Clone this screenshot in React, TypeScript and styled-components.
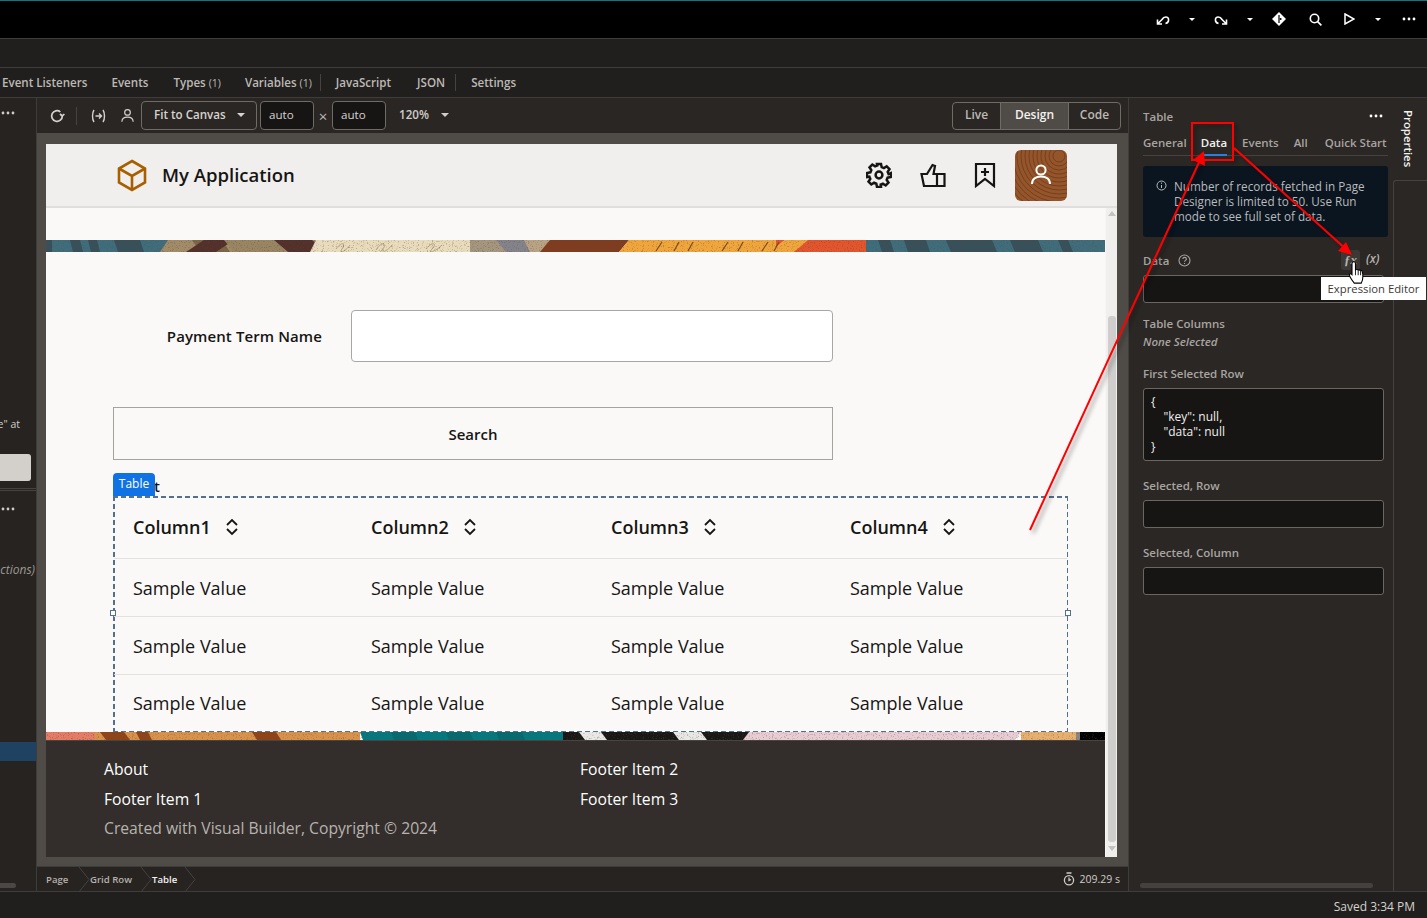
import type { ReactNode } from "react";
import styled, { createGlobalStyle } from "styled-components";

const GlobalStyle = createGlobalStyle`
  html, body {
    margin: 0;
    padding: 0;
    background: #201f1d;
    overflow: hidden;
  }
  * { box-sizing: border-box; }
  body {
    font-family: "Open Sans", "Noto Sans", sans-serif;
    -webkit-font-smoothing: antialiased;
  }
`;

const Shell = styled.div`
  position: relative;
  width: 1427px;
  height: 918px;
  display: flex;
  flex-direction: column;
  overflow: hidden;
  color: #d5d2ce;
`;

/* ---------- top chrome ---------- */

const TopBar = styled.header`
  height: 39px;
  flex: none;
  background: #000;
  border-top: 1px solid #127680;
  border-bottom: 1px solid #3f3d3b;
  display: flex;
  align-items: center;
  justify-content: flex-end;
  color: #fff;
  padding: 0 9px 1px 0;
`;

const TopIcon = styled.span<{ $w: number }>`
  width: ${(p) => p.$w}px;
  display: flex;
  justify-content: center;
  align-items: center;
`;

const SubBar = styled.div`
  height: 29px;
  flex: none;
  background: #201f1d;
  border-bottom: 1px solid #3f3d3b;
`;

const PageTabs = styled.nav`
  height: 30px;
  flex: none;
  background: #201f1d;
  border-bottom: 1px solid #3f3d3b;
  display: flex;
  align-items: center;
  padding-left: 2px;
  font-size: 11.6px;
  font-weight: 600;
  color: #bdb9b4;
  white-space: nowrap;
`;

const PageTab = styled.span<{ $gap: number }>`
  margin-right: ${(p) => p.$gap}px;
`;

const Count = styled.span`
  font-size: 10.5px;
  font-weight: 400;
  margin-left: 3px;
`;

const TabDivider = styled.i`
  width: 1px;
  height: 17px;
  background: #45423f;
  margin-right: 15px;
`;

const Main = styled.div`
  height: 794px;
  flex: none;
  display: flex;
  border-bottom: 1px solid #3f3d3b;
`;

/* ---------- clipped left panel ---------- */

const LeftPanel = styled.aside`
  width: 37px;
  flex: none;
  background: #272320;
  border-right: 1px solid #3f3d3b;
  display: flex;
  flex-direction: column;
  align-items: flex-end;
  overflow: hidden;
  position: relative;
`;

const LeftDots = styled.span<{ $top: number }>`
  align-self: flex-start;
  margin: ${(p) => p.$top}px 0 0 1px;
  display: flex;
`;

const LeftNote = styled.div`
  margin-top: 302px;
  margin-right: 16px;
  font-size: 10.5px;
  color: #cfccc8;
  white-space: nowrap;
`;

const LeftButton = styled.div`
  margin-top: 23px;
  width: 100%;
  padding-right: 5px;
  height: 27px;
  &::after {
    content: "";
    display: block;
    height: 27px;
    background: #d3d0cc;
    border-radius: 0 3px 3px 0;
  }
`;

const LeftRule = styled.div`
  width: 100%;
  height: 3px;
  margin-top: 7px;
  border-top: 1px solid #45423f;
  border-bottom: 1px solid #45423f;
`;

const LeftItalic = styled.div`
  margin-top: 50px;
  margin-right: 1px;
  font-size: 12px;
  font-style: italic;
  color: #9d9994;
  white-space: nowrap;
`;

const LeftSelected = styled.div`
  margin-top: 164px;
  width: 100%;
  height: 19px;
  background: #1f4263;
`;

const LeftScroll = styled.div`
  position: absolute;
  left: 0;
  bottom: 3px;
  width: 16px;
  height: 5px;
  background: #4a4744;
  border-radius: 0 3px 3px 0;
`;

/* ---------- centre column ---------- */

const Center = styled.section`
  width: 1092px;
  flex: none;
  display: flex;
  flex-direction: column;
  border-right: 1px solid #3f3d3b;
`;

const Toolbar = styled.div`
  height: 35px;
  flex: none;
  background: #2a2623;
  display: flex;
  align-items: center;
  padding: 0 7px 0 12px;
  font-size: 11.6px;
`;

const ToolDivider = styled.i`
  width: 1px;
  height: 18px;
  background: #45423f;
  margin: 0 14px 0 11px;
`;

const ToolIcon = styled.span<{ $gap?: number }>`
  display: flex;
  margin-right: ${(p) => p.$gap ?? 0}px;
`;

const SelectBox = styled.div`
  width: 116px;
  height: 29px;
  border: 1px solid #6f6c68;
  border-radius: 4px;
  display: flex;
  align-items: center;
  justify-content: space-between;
  padding: 0 11px 2px 12px;
  margin-right: 3px;
  font-weight: 600;
  color: #d6d3cf;
`;

const SizeInput = styled.div`
  width: 54px;
  height: 29px;
  background: #161514;
  border: 1px solid #6f6c68;
  border-radius: 4px;
  display: flex;
  align-items: center;
  padding: 0 0 2px 8px;
  color: #d6d3cf;
`;

const Times = styled.span`
  width: 18px;
  text-align: center;
  color: #bdb9b4;
  font-size: 15px;
  line-height: 20px;
`;

const Zoom = styled.div`
  margin-left: 13px;
  display: flex;
  align-items: center;
  gap: 12px;
  padding-bottom: 2px;
  font-weight: 600;
  color: #d0cdc8;
`;

const Segments = styled.div`
  margin-left: auto;
  height: 28px;
  display: flex;
  border: 1px solid #6f6c68;
  border-radius: 4px;
  overflow: hidden;
  font-size: 12px;
  font-weight: 600;
`;

const Segment = styled.div<{ $w: number; $active?: boolean }>`
  width: ${(p) => p.$w}px;
  display: flex;
  align-items: center;
  justify-content: center;
  padding-bottom: 2px;
  color: ${(p) => (p.$active ? "#f4f2ef" : "#bdb9b4")};
  background: ${(p) => (p.$active ? "#4f4b47" : "transparent")};
  & + & {
    border-left: 1px solid #6f6c68;
  }
`;

const Canvas = styled.div`
  flex: 1;
  background: #4f4b47;
  padding: 11px 11px 9px 9px;
  min-height: 0;
`;

const Preview = styled.div`
  height: 100%;
  background: #fbf9f8;
  display: flex;
  flex-direction: column;
  color: #161513;
`;

const AppHeader = styled.div`
  height: 64px;
  flex: none;
  background: #f0efee;
  border-bottom: 2px solid #e0dfdd;
  display: flex;
  align-items: center;
  padding: 0 50px 0 71px;
`;

const Brand = styled.div`
  font-size: 18.5px;
  font-weight: 600;
  margin: 0 0 2px 15px;
`;

const HeaderIcons = styled.div`
  margin-left: auto;
  display: flex;
  align-items: center;
`;

const HeaderIcon = styled.span<{ $gap: number }>`
  display: flex;
  margin-right: ${(p) => p.$gap}px;
`;

const Avatar = styled.div`
  width: 52px;
  height: 51px;
  border-radius: 6px;
  overflow: hidden;
  display: flex;
`;

const PreviewBody = styled.div`
  flex: 1;
  display: flex;
  min-height: 0;
`;

const Page = styled.div`
  width: 1059px;
  display: flex;
  flex-direction: column;
`;

const Strip = styled.svg<{ $top: number; $h: number }>`
  display: block;
  flex: none;
  width: 1059px;
  height: ${(p) => p.$h}px;
  margin-top: ${(p) => p.$top}px;
`;

const TermRow = styled.div`
  margin-top: 58px;
  height: 52px;
  display: flex;
  align-items: center;
`;

const TermLabel = styled.label`
  width: 276px;
  text-align: right;
  font-size: 15px;
  font-weight: 600;
  letter-spacing: 0.1px;
`;

const TermInput = styled.div`
  margin-left: 29px;
  width: 482px;
  height: 52px;
  background: #fff;
  border: 1.5px solid #a9a7a4;
  border-radius: 4px;
`;

const SearchButton = styled.div`
  margin: 45px 0 0 67px;
  width: 720px;
  height: 53px;
  border: 1.5px solid #a5a3a0;
  display: flex;
  align-items: center;
  justify-content: center;
  font-size: 15px;
  font-weight: 600;
`;

const dash = "linear-gradient(to right, #54708f 60%, transparent 0)";
const dashV = "linear-gradient(to bottom, #54708f 60%, transparent 0)";

const TableFrame = styled.div`
  position: relative;
  margin: 36px 0 0 67px;
  width: 955px;
  height: 236px;
  padding: 1px;
  background:
    ${dash} left top / 8px 1.5px repeat-x,
    ${dash} left bottom / 8px 1.5px repeat-x,
    ${dashV} left top / 1.5px 8px repeat-y,
    ${dashV} right top / 1.5px 8px repeat-y;
`;

const TableBadge = styled.div`
  position: absolute;
  left: 0;
  top: -23px;
  width: 42px;
  height: 23px;
  background: #0f72e5;
  color: #fff;
  border-radius: 4px 4px 0 0;
  font-size: 12px;
  display: flex;
  align-items: center;
  justify-content: center;
  padding-bottom: 2px;
`;

const BehindBadge = styled.span`
  position: absolute;
  left: 41px;
  top: -20px;
  font-size: 15px;
  font-weight: 600;
  line-height: 20px;
`;

const Handle = styled.i<{ $side: "left" | "right" }>`
  position: absolute;
  ${(p) => p.$side}: -3px;
  top: 114px;
  width: 6px;
  height: 6px;
  background: #fff;
  border: 1px solid #54708f;
`;

const TRow = styled.div<{ $head?: boolean }>`
  display: grid;
  grid-template-columns: 238px 240px 239px 1fr;
  align-items: center;
  padding-left: 19px;
  height: ${(p) => (p.$head ? "62px" : "58px")};
  padding-bottom: ${(p) => (p.$head ? "2px" : "0")};
  border-bottom: 1px solid #e4e2e0;
  font-size: 18px;
  font-weight: ${(p) => (p.$head ? 600 : 400)};
  &:last-child {
    border-bottom: none;
    height: 56px;
  }
`;

const HeadCell = styled.div`
  display: flex;
  align-items: center;
  gap: 14px;
`;

const SiteFooter = styled.footer`
  flex: 1;
  background: #332e2b;
  border-top: 1px solid #4a443f;
  display: grid;
  grid-template-columns: 476px 1fr;
  grid-auto-rows: 30px;
  padding: 17px 0 0 58px;
  font-size: 15.7px;
  color: #fff;
`;

const FooterCopy = styled.div`
  grid-column: 1 / 3;
  color: #b7b3ae;
  line-height: 28px;
  margin-top: -4px;
`;

const ScrollTrack = styled.div`
  width: 12px;
  background: #f0efee;
  display: flex;
  flex-direction: column;
  align-items: center;
  border-left: 1px solid #f7f6f5;
`;

const ScrollThumb = styled.div`
  width: 8px;
  height: 526px;
  margin-top: 100px;
  background: #cfcecc;
  border-radius: 3px;
`;

const ScrollArrow = styled.i<{ $down?: boolean }>`
  width: 0;
  height: 0;
  margin-top: ${(p) => (p.$down ? "4px" : "3px")};
  border-left: 4px solid transparent;
  border-right: 4px solid transparent;
  ${(p) => (p.$down ? "border-top" : "border-bottom")}: 5px solid #c3c2c0;
`;

const Crumbs = styled.div`
  height: 25px;
  flex: none;
  background: #272320;
  border-top: 1px solid #3f3d3b;
  display: flex;
  align-items: center;
  font-size: 9.6px;
  font-weight: 600;
  color: #b5b1ac;
  padding: 0 8px 0 9px;
`;

const Crumb = styled.span<{ $active?: boolean; $w: number }>`
  width: ${(p) => p.$w}px;
  color: ${(p) => (p.$active ? "#f4f2ef" : "#b5b1ac")};
  display: flex;
  align-items: center;
  justify-content: space-between;
`;

const Timer = styled.div`
  margin-left: auto;
  display: flex;
  align-items: center;
  gap: 4px;
  font-size: 10.5px;
  font-weight: 400;
  color: #cfccc8;
`;

/* ---------- properties panel ---------- */

const Props = styled.aside`
  width: 264px;
  flex: none;
  background: #2b2725;
  padding: 0 5px 0 14px;
  position: relative;
  font-size: 11.5px;
  font-weight: 600;
  color: #a8a4a0;
`;

const PropsTitle = styled.div`
  height: 37px;
  padding-top: 11px;
  display: flex;
  justify-content: space-between;
  padding-right: 5px;
  line-height: 16px;
  svg {
    margin-top: 5px;
  }
`;

const PropsTabs = styled.div`
  height: 21px;
  border-bottom: 1px solid #45423f;
  display: flex;
  line-height: 16px;
`;

const PropsTab = styled.span<{ $gap: number; $active?: boolean }>`
  margin-right: ${(p) => p.$gap}px;
  height: 21px;
  color: ${(p) => (p.$active ? "#f4f2ef" : "#a8a4a0")};
  border-bottom: ${(p) => (p.$active ? "2px solid #2a7fe0" : "none")};
  white-space: nowrap;
`;

const InfoBox = styled.div`
  margin-top: 10px;
  height: 71px;
  background: #0a1520;
  border-radius: 3px;
  padding: 13px 8px 0 13px;
  display: flex;
  gap: 7px;
  font-size: 11.7px;
  font-weight: 400;
  line-height: 15px;
  color: #b9bbbd;
  svg {
    flex: none;
    margin-top: 1px;
  }
`;

const DataRow = styled.div`
  margin-top: 13px;
  height: 20px;
  display: flex;
  align-items: center;
  gap: 9px;
`;

const ExprButton = styled.span`
  margin-left: auto;
  width: 19px;
  height: 20px;
  background: #3b3835;
  border-radius: 3px;
  display: flex;
  align-items: center;
  justify-content: center;
  font-style: italic;
  font-family: "Liberation Serif", serif;
  font-size: 13px;
  color: #b5b1ac;
`;

const VarButton = styled.span`
  width: 16px;
  margin: 0 6px 3px -3px;
  font-style: italic;
  font-size: 12px;
  white-space: nowrap;
  color: #b5b1ac;
`;

const FieldBox = styled.div<{ $top: number; $h?: number }>`
  margin-top: ${(p) => p.$top}px;
  width: 241px;
  height: ${(p) => p.$h ?? 28}px;
  background: #161514;
  border: 1px solid #6a6763;
  border-radius: 3px;
`;

const FieldLabel = styled.div<{ $top: number }>`
  margin-top: ${(p) => p.$top}px;
  line-height: 16px;
  height: 16px;
`;

const NoneSelected = styled.div`
  margin-top: 2px;
  height: 16px;
  line-height: 16px;
  font-style: italic;
`;

const JsonBox = styled(FieldBox)`
  font-weight: 400;
  font-size: 12px;
  line-height: 15px;
  color: #f0eeec;
  padding: 5px 7px;
  white-space: pre;
`;

const PropsScroll = styled.div`
  position: absolute;
  left: 11px;
  right: 20px;
  bottom: 3px;
  height: 5px;
  background: #44413e;
  border-radius: 3px;
`;

const Rail = styled.aside`
  width: 34px;
  flex: none;
  background: #2b2725;
`;

const RailTab = styled.div`
  height: 82px;
  padding: 12px 0 0 7px;
  font-size: 11.4px;
  font-weight: 600;
  line-height: 16px;
  color: #f4f2ef;
  writing-mode: vertical-rl;
`;

const RailBody = styled.div`
  height: calc(100% - 82px);
  border-left: 1px solid #45423f;
  border-top: 1px solid #45423f;
  border-top-left-radius: 3px;
`;

const StatusBar = styled.footer`
  flex: 1;
  background: #201f1d;
  display: flex;
  align-items: center;
  justify-content: flex-end;
  padding: 3px 12px 0 0;
  font-size: 12px;
  color: #d5d2ce;
`;

/* ---------- things lying over the page ---------- */

const Annotations = styled.svg`
  position: absolute;
  inset: 0;
  width: 1427px;
  height: 918px;
  pointer-events: none;
`;

const Tooltip = styled.div`
  position: absolute;
  left: 1321px;
  top: 277px;
  width: 105px;
  height: 23px;
  background: #fff;
  color: #3b3835;
  font-size: 11.3px;
  display: flex;
  align-items: center;
  justify-content: center;
  white-space: nowrap;
`;

const Cursor = styled.svg`
  position: absolute;
  left: 1348px;
  top: 260px;
`;

/* ---------- drawings ---------- */

const Dots = ({ color = "#fff" }: { color?: string }) => (
  <svg width="14" height="4" viewBox="0 0 14 4">
    <circle cx="2" cy="2" r="1.4" fill={color} />
    <circle cx="7" cy="2" r="1.4" fill={color} />
    <circle cx="12" cy="2" r="1.4" fill={color} />
  </svg>
);

const Caret = ({ color = "#fff", w = 8 }: { color?: string; w?: number }) => (
  <svg width={w} height={w / 2} viewBox="0 0 8 4">
    <path d="M0 0h8L4 4z" fill={color} />
  </svg>
);

const Stroke = ({ size, children, width = 2 }: { size: number; children: ReactNode; width?: number }) => (
  <svg width={size} height={size} viewBox="0 0 24 24" fill="none" stroke="currentColor" strokeWidth={width}>
    {children}
  </svg>
);

// x, width, fill, slant of the band's lower edge against its upper one
type Band = readonly [number, number, string, number];

const topBands: Band[] = [
  [0, 112, "#3f6d7b", 0],
  [0, 6, "#37505a", 0],
  [24, 10, "#37505a", 3],
  [42, 9, "#37505a", 3],
  [68, 26, "#37505a", 4],
  [108, 170, "#a18b68", 0],
  [108, 14, "#3f6d7b", -8],
  [146, 30, "#7d6647", 8],
  [158, 30, "#53302a", -18],
  [178, 52, "#9a8562", 10],
  [228, 38, "#53302a", 14],
  [270, 170, "#e8dcbc", -6],
  [424, 90, "#a5967f", 0],
  [424, 30, "#a5967f", 10],
  [450, 28, "#85838a", 10],
  [478, 26, "#b8a485", 6],
  [504, 79, "#803c1e", -10],
  [583, 155, "#f0a63c", -10],
  [730, 100, "#e2552d", 0],
  [738, 24, "#f0a63c", -14],
  [820, 239, "#3f6d7b", 0],
  [832, 12, "#37505a", 4],
  [858, 22, "#37505a", 4],
  [900, 46, "#37505a", 5],
  [964, 28, "#37505a", 5],
  [1012, 10, "#37505a", 5],
];

const bottomBands: Band[] = [
  [0, 49, "#e57c66", 0],
  [49, 265, "#d8924c", 0],
  [54, 24, "#8f4518", 6],
  [90, 12, "#8f4518", 4],
  [206, 24, "#8f4518", 5],
  [314, 203, "#04797f", 3],
  [345, 24, "#066b70", 3],
  [400, 24, "#066b70", 3],
  [450, 26, "#066b70", 3],
  [517, 186, "#1a1816", 0],
  [533, 22, "#e9e8e6", 6],
  [627, 28, "#e9e8e6", 6],
  [703, 272, "#e9cdd5", -6],
  [975, 55, "#e8b070", 0],
  [1030, 4, "#8b8683", 0],
  [1034, 25, "#000000", 0],
];

const StripArt = ({ bands, top, h, id, children }: { bands: Band[]; top: number; h: number; id: string; children?: ReactNode }) => (
  <Strip $top={top} $h={h} viewBox={`0 0 1059 ${h}`}>
    <defs>
      <filter id={id} x="0" y="0" width="100%" height="100%">
        <feTurbulence type="fractalNoise" baseFrequency="0.8" numOctaves="2" seed="4" />
        <feColorMatrix values="0 0 0 0 0.1  0 0 0 0 0.07  0 0 0 0 0.05  0 0 0 -5 2.2" />
      </filter>
    </defs>
    {bands.map(([x, w, fill, slant], i) => (
      <polygon key={i} points={`${x},0 ${x + w},0 ${x + w + slant},${h} ${x + slant},${h}`} fill={fill} />
    ))}
    {children}
    <rect width="1059" height={h} filter={`url(#${id})`} opacity="0.35" />
  </Strip>
);

const SortIcon = () => (
  <svg width="14" height="18" viewBox="0 0 14 18" fill="none" stroke="#161513" strokeWidth="1.8">
    <path d="M2 7l5-5 5 5M2 11l5 5 5-5" />
  </svg>
);

const Chevron = () => (
  <svg width="12" height="25" viewBox="0 0 12 25" fill="none" stroke="#45423f">
    <path d="M1 0l10 12.5L1 25" />
  </svg>
);

const woodRings = [6, 10, 14, 18, 22, 26, 30, 34, 38, 42, 46, 50, 54, 58];
const columns = ["Column1", "Column2", "Column3", "Column4"];

function App() {
  return (
    <Shell>
      <GlobalStyle />
      <TopBar>
        <TopIcon $w={18}>
          <svg width="14" height="12" viewBox="0 0 14 12" fill="none" stroke="#fff" strokeWidth="1.6">
            <path d="M1.5 6.5V11H6M1.5 11L6 6.5C8 3 12 3.5 12.5 6c.3 2-1 4-3 4.5" />
          </svg>
        </TopIcon>
        <TopIcon $w={40}><Caret w={6} /></TopIcon>
        <TopIcon $w={18}>
          <svg width="14" height="12" viewBox="0 0 14 12" fill="none" stroke="#fff" strokeWidth="1.6">
            <path d="M12.5 6.5V11H8M12.5 11L8 6.5C6 3 2 3.5 1.5 6c-.3 2 1 4 3 4.5" />
          </svg>
        </TopIcon>
        <TopIcon $w={40}><Caret w={6} /></TopIcon>
        <TopIcon $w={18}>
          <svg width="14" height="14" viewBox="0 0 14 14">
            <path d="M7 0l7 7-7 7-7-7z" fill="#fff" />
            <path d="M7 3v8" stroke="#000" strokeWidth="1.2" />
            <circle cx="8.6" cy="7" r="1" fill="#000" />
          </svg>
        </TopIcon>
        <TopIcon $w={54}>
          <svg width="13" height="13" viewBox="0 0 13 13" fill="none" stroke="#fff" strokeWidth="1.6">
            <circle cx="5.5" cy="5.5" r="4.2" />
            <path d="M8.6 8.6L12.4 12.4" />
          </svg>
        </TopIcon>
        <TopIcon $w={14}>
          <svg width="11" height="12" viewBox="0 0 11 12" fill="none" stroke="#fff" strokeWidth="1.5">
            <path d="M1 1l9 5-9 5z" />
          </svg>
        </TopIcon>
        <TopIcon $w={44}><Caret w={6} /></TopIcon>
        <TopIcon $w={18}><Dots /></TopIcon>
      </TopBar>
      <SubBar />
      <PageTabs>
        <PageTab $gap={24}>Event Listeners</PageTab>
        <PageTab $gap={25}>Events</PageTab>
        <PageTab $gap={24}>Types<Count>(1)</Count></PageTab>
        <PageTab $gap={8}>Variables<Count>(1)</Count></PageTab>
        <TabDivider />
        <PageTab $gap={26}>JavaScript</PageTab>
        <PageTab $gap={10}>JSON</PageTab>
        <TabDivider />
        <PageTab $gap={0}>Settings</PageTab>
      </PageTabs>
      <Main>
        <LeftPanel>
          <LeftDots $top={13}><Dots color="#cfccc8" /></LeftDots>
          <LeftNote>e" at</LeftNote>
          <LeftButton />
          <LeftRule />
          <LeftDots $top={16}><Dots color="#cfccc8" /></LeftDots>
          <LeftItalic>ctions)</LeftItalic>
          <LeftSelected />
          <LeftScroll />
        </LeftPanel>

        <Center>
          <Toolbar>
            <ToolIcon>
              <Stroke size={16} width={2.6}>
                <path d="M20 12a8 8 0 1 1-3-6.2M20 12l-3.5-3M20 12l3-3" />
              </Stroke>
            </ToolIcon>
            <ToolDivider />
            <ToolIcon $gap={14}>
              <svg width="15" height="14" viewBox="0 0 15 14" fill="none" stroke="currentColor" strokeWidth="1.4">
                <path d="M3 1C1 4 1 10 3 13M12 1c2 3 2 9 0 12M4.5 7h6M8 4.5L10.5 7 8 9.5" />
              </svg>
            </ToolIcon>
            <ToolIcon $gap={6}>
              <Stroke size={15} width={1.9}>
                <circle cx="12" cy="7" r="4.5" />
                <path d="M3 22c0-5 4-7.5 9-7.5s9 2.5 9 7.5" />
              </Stroke>
            </ToolIcon>
            <SelectBox>Fit to Canvas<Caret color="#d6d3cf" /></SelectBox>
            <SizeInput>auto</SizeInput>
            <Times>×</Times>
            <SizeInput>auto</SizeInput>
            <Zoom>120%<Caret color="#d0cdc8" /></Zoom>
            <Segments>
              <Segment $w={47}>Live</Segment>
              <Segment $w={68} $active>Design</Segment>
              <Segment $w={52}>Code</Segment>
            </Segments>
          </Toolbar>

          <Canvas>
            <Preview>
              <AppHeader>
                <svg width="30" height="33" viewBox="0 0 30 33" fill="none" stroke="#a85f00" strokeWidth="2.6">
                  <path d="M15 2l13 7.5v14L15 31 2 23.5v-14z" />
                  <path d="M2 9.5L15 17l13-7.5M15 17v14" />
                </svg>
                <Brand>My Application</Brand>
                <HeaderIcons>
                  <HeaderIcon $gap={28}>
                    <svg width="26" height="26" viewBox="0 0 26 26" fill="none" stroke="#161513" strokeWidth="2.5">
                      <path d="M11 2h4l.7 3.2 2.2.9 2.8-1.8 2.8 2.8-1.8 2.8.9 2.2L25 11v4l-3.4.7-.9 2.2 1.8 2.8-2.8 2.8-2.8-1.8-2.2.9L15 25h-4l-.7-3.4-2.2-.9-2.8 1.8-2.8-2.8 1.8-2.8-.9-2.2L1 15v-4l3.4-.7.9-2.2L3.5 5.3l2.8-2.8 2.8 1.8 2.2-.9z" />
                      <circle cx="13" cy="13" r="3.4" />
                    </svg>
                  </HeaderIcon>
                  <HeaderIcon $gap={28}>
                    <svg width="26" height="26" viewBox="0 0 26 26" fill="none" stroke="#161513" strokeWidth="2.2">
                      <path d="M4 24L1.5 12H7l5.5-9 2.5 1-1.500 8h11V24zM17 12v12" />
                    </svg>
                  </HeaderIcon>
                  <HeaderIcon $gap={19}>
                    <svg width="22" height="26" viewBox="0 0 22 26" fill="none" stroke="#161513" strokeWidth="2.2">
                      <path d="M2 2h18v22l-9-7-9 7z" />
                      <path d="M11 6v8M7 10h8" />
                    </svg>
                  </HeaderIcon>
                  <Avatar>
                    <svg width="52" height="51" viewBox="0 0 52 51">
                      <rect width="52" height="51" fill="#94552b" />
                      <g fill="none" stroke="#6e3a1b" strokeWidth="0.8">
                        {woodRings.map((r) => (
                          <circle key={r} cx="44" cy="6" r={r} />
                        ))}
                      </g>
                      <circle cx="26" cy="20" r="4.6" fill="none" stroke="#fff" strokeWidth="2" />
                      <path d="M17 34c0-5 4-7.5 9-7.5s9 2.5 9 7.5" fill="none" stroke="#fff" strokeWidth="2" />
                    </svg>
                  </Avatar>
                </HeaderIcons>
              </AppHeader>
              <PreviewBody>
                <Page>
                  <StripArt bands={topBands} top={32} h={12} id="speckle-top">
                    <path
                      d="M290 9c6-8 10-6 6 0s4 2 8-4M330 10c6-10 12-6 6 0s6 1 10-5M380 9c6-8 12-6 6 0s6 1 10-4"
                      fill="none"
                      stroke="#b3a27f"
                    />
                    <path
                      d="M610 11l6-9M628 11l5-9M642 11l5-9M676 11l6-9M692 11l5-9M716 11l6-9M728 11l5-9"
                      fill="none"
                      stroke="#7a4a1e"
                      strokeWidth="1.2"
                    />
                  </StripArt>
                  <TermRow>
                    <TermLabel>Payment Term Name</TermLabel>
                    <TermInput />
                  </TermRow>
                  <SearchButton>Search</SearchButton>
                  <TableFrame>
                    <BehindBadge>t</BehindBadge>
                    <TableBadge>Table</TableBadge>
                    <Handle $side="left" />
                    <Handle $side="right" />
                    <TRow $head>
                      {columns.map((c) => (
                        <HeadCell key={c}>{c}<SortIcon /></HeadCell>
                      ))}
                    </TRow>
                    {[0, 1, 2].map((r) => (
                      <TRow key={r}>
                        {columns.map((c) => (
                          <div key={c}>Sample Value</div>
                        ))}
                      </TRow>
                    ))}
                  </TableFrame>
                  <StripArt bands={bottomBands} top={0} h={8} id="speckle-bottom" />
                  <SiteFooter>
                    <div>About</div>
                    <div>Footer Item 2</div>
                    <div>Footer Item 1</div>
                    <div>Footer Item 3</div>
                    <FooterCopy>Created with Visual Builder, Copyright © 2024</FooterCopy>
                  </SiteFooter>
                </Page>
                <ScrollTrack>
                  <ScrollArrow />
                  <ScrollThumb />
                  <ScrollArrow $down />
                </ScrollTrack>
              </PreviewBody>
            </Preview>
          </Canvas>

          <Crumbs>
            <Crumb $w={44}>Page<Chevron /></Crumb>
            <Crumb $w={62}>Grid Row<Chevron /></Crumb>
            <Crumb $w={44} $active>Table<Chevron /></Crumb>
            <Timer>
              <svg width="12" height="14" viewBox="0 0 12 14" fill="none" stroke="#cfccc8" strokeWidth="1.3">
                <circle cx="6" cy="8.2" r="4.6" />
                <path d="M3.5 1h5M6 5.5v3l2-1" />
              </svg>
              209.29 s
            </Timer>
          </Crumbs>
        </Center>

        <Props>
          <PropsTitle>
            <span>Table</span>
            <Dots />
          </PropsTitle>
          <PropsTabs>
            <PropsTab $gap={14}>General</PropsTab>
            <PropsTab $gap={15} $active>Data</PropsTab>
            <PropsTab $gap={15}>Events</PropsTab>
            <PropsTab $gap={17}>All</PropsTab>
            <PropsTab $gap={0}>Quick Start</PropsTab>
          </PropsTabs>
          <InfoBox>
            <svg width="11" height="11" viewBox="0 0 11 11" fill="none" stroke="#b9bbbd">
              <circle cx="5.5" cy="5.5" r="4.5" />
              <path d="M5.5 5v3M5.5 2.6v1.2" />
            </svg>
            <div>Number of records fetched in Page Designer is limited to 50. Use Run mode to see full set of data.</div>
          </InfoBox>
          <DataRow>
            <span>Data</span>
            <svg width="13" height="13" viewBox="0 0 13 13" fill="none" stroke="#a8a4a0" strokeWidth="1.1">
              <circle cx="6.5" cy="6.5" r="5.5" />
              <path d="M4.8 5c0-2.2 3.6-2.2 3.6 0 0 1.4-1.9 1.3-1.9 2.8M6.5 9v1" />
            </svg>
            <ExprButton>ƒx</ExprButton>
            <VarButton>(x)</VarButton>
          </DataRow>
          <FieldBox $top={5} />
          <FieldLabel $top={13}>Table Columns</FieldLabel>
          <NoneSelected>None Selected</NoneSelected>
          <FieldLabel $top={16}>First Selected Row</FieldLabel>
          <JsonBox $top={6} $h={73}>{'{\n    "key": null,\n    "data": null\n}'}</JsonBox>
          <FieldLabel $top={17}>Selected, Row</FieldLabel>
          <FieldBox $top={6} />
          <FieldLabel $top={17}>Selected, Column</FieldLabel>
          <FieldBox $top={6} />
          <PropsScroll />
        </Props>

        <Rail>
          <RailTab>Properties</RailTab>
          <RailBody />
        </Rail>
      </Main>
      <StatusBar>Saved 3:34 PM</StatusBar>

      <Annotations viewBox="0 0 1427 918">
        <defs>
          <filter id="soft" x="-20%" y="-20%" width="140%" height="140%">
            <feDropShadow dx="3" dy="3" stdDeviation="2" floodColor="#000" floodOpacity="0.4" />
          </filter>
        </defs>
        <g filter="url(#soft)" fill="none" stroke="#f00">
          <rect x="1192" y="123" width="41" height="37" strokeWidth="2" />
          <path d="M1030 530L1201 158" strokeWidth="2" />
          <path d="M1234 148L1348 251" strokeWidth="2" />
        </g>
        <path d="M1204 151l1 15-12-6z" fill="#f00" />
        <path d="M1352 255l-14-4 8-9z" fill="#f00" />
      </Annotations>

      <Tooltip>Expression Editor</Tooltip>
      <Cursor width="18" height="25" viewBox="0 0 16 23">
        <path
          d="M5 1.5c1 0 1.6.7 1.6 1.7V9l1-.2c.6-.2 1.2 0 1.5.4.7-.3 1.4-.1 1.7.4.8-.3 1.6 0 1.900.7.5 1 .7 3 .7 5 0 2.5-.7 4.5-1.5 6H5.5C4 19.5 1.5 16 1 14c-.2-1 .7-1.7 1.7-1.2l.7.7V3.200C3.400 2.200 4 1.500 5 1.500z"
          fill="#fff"
          stroke="#000"
          strokeWidth="1"
        />
        <path d="M6.6 9v5M9.100 9.200V14M11.300 10v4" stroke="#000" strokeWidth="0.8" fill="none" />
      </Cursor>
    </Shell>
  );
}

export default App;
